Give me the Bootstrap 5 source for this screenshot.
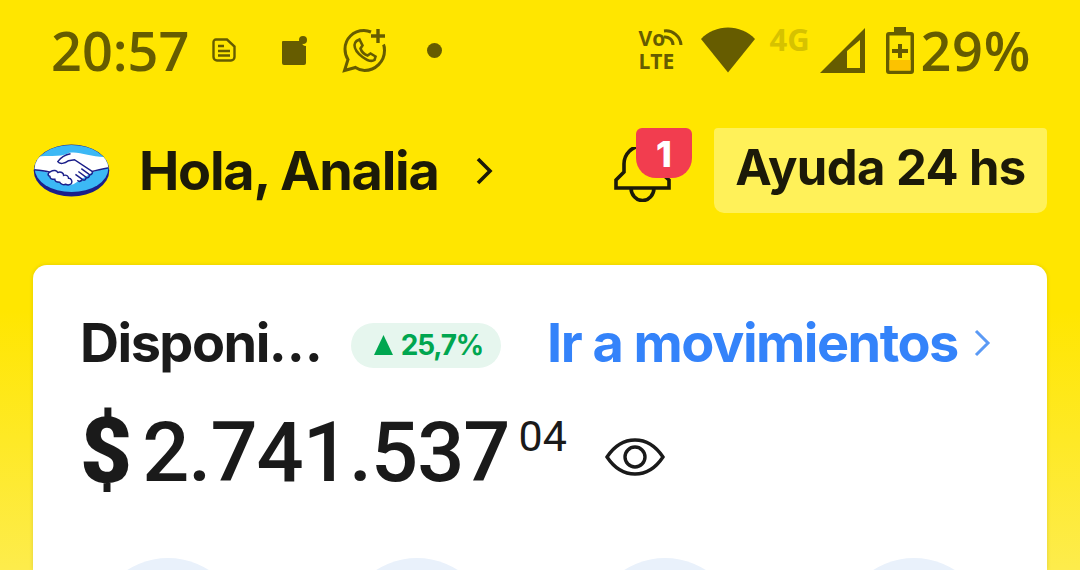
<!doctype html>
<html lang="es"><head><meta charset="utf-8">
<link href="https://cdn.jsdelivr.net/npm/bootstrap@5.3.0/dist/css/bootstrap.min.css" rel="stylesheet">
<style>
html,body{height:570px;overflow:hidden}
body{background:linear-gradient(#ffe600 0,#ffe600 310px,#fdec4c 570px);font-family:Inter,"Liberation Sans",sans-serif;color:#1c1a08}
.stbar{height:128px;padding:0 49px 28px 51px;color:#665c00}
.sttext{font-family:"Open Sans",sans-serif;font-size:54px;font-weight:600;line-height:1}
.pctnum{letter-spacing:.7px}
.gapdoc{margin-left:23px}.gapsq{margin-left:45px}.gapwa{margin-left:35px}.gapdot{margin-left:40px}
.volte{width:44px;height:46px;font-family:"Open Sans",sans-serif;font-size:21px;font-weight:700;line-height:23px;color:#665c00}
.gapwifi{margin-left:18px}.gap4g{margin-left:15px}.gapsig{margin-left:9px}.gapbat{margin-left:21px}.gappc{margin-left:7px}
.fourg{font-family:"Open Sans",sans-serif;font-size:31px;font-weight:700;color:#d6c200;line-height:1;margin-top:-21px;width:41px}
.hdr{height:137px;padding:0 33px 0 33px}
.hdrleft{height:85px}
.hola{font-size:54px;font-weight:700;letter-spacing:-1.25px;line-height:1;margin-left:29px}
.chevgap{margin-left:36px}
.bellbox{width:78px;height:85px;margin-right:22px}
.bellicon{left:0;top:19px}
.notif{position:absolute;left:22px;top:0;width:56px;height:50px;background:#f23d4f;color:#fff;border-radius:6px 6px 20px 20px;font-size:36px;font-weight:800;text-align:center;line-height:52px}
.helpbtn{width:333px;height:85px;background:#fff159;border-radius:4px 4px 10px 10px;font-size:49px;font-weight:700;letter-spacing:-.6px;line-height:1;padding-bottom:6px}
.panel{margin:0 33px;height:305px;overflow:hidden;border-radius:14px 14px 0 0;background:#fff;padding:51px 9px 0 11px;color:#1a1a1a;box-shadow:0 0 4px rgba(0,0,0,.12)}
.inner{padding-left:36px}
.disp{font-size:54px;font-weight:700;letter-spacing:-1.5px;line-height:1;width:228px}
.pct{width:150px;height:45px;border-radius:23px;background:#e6f6ee;color:#00a650;font-size:28px;font-weight:700;letter-spacing:-1.2px;margin-left:43px;margin-top:4px;padding-left:5px}
.golink{color:#3483fa;font-size:54px;font-weight:700;letter-spacing:-1.5px;line-height:1;text-decoration:none;margin-left:46px}
.chevblue{margin-left:16px}
.money{font-family:Roboto,sans-serif;font-size:83px;font-weight:500;letter-spacing:-1px;line-height:1;margin-top:37px}
.cents{font-size:43px;font-weight:400;letter-spacing:0;line-height:1;margin:8px 0 0 9px}
.dollar{font-weight:900;font-size:90px;margin-right:11px}
.eyegap{margin-left:38px;margin-top:10px}
.actions{margin-top:61px}
.actslot{width:25%}
.roundact{width:150px;height:150px;border-radius:50%;background:#e9f1fb}
</style></head><body>
<div class="stbar d-flex align-items-center">
 <span class="sttext">20:57</span>
 <svg class="gapdoc" width="24" height="24" viewBox="0 0 24 24" fill="none" stroke="#665c00" stroke-width="2.4"><path d="M4 1.500h11l7.500 7V19a3.500 3.500 0 0 1-3.500 3.500H5A3.500 3.500 0 0 1 1.500 19V4A2.500 2.500 0 0 1 4 1.500z"/><path d="M6 8h6M6 13h12M6 17.500h12"/></svg>
 <svg class="gapsq" width="26" height="29" viewBox="0 0 26 29" fill="#665c00"><path d="M2 5h19v1a4 4 0 0 0 4 4v17a2 2 0 0 1-2 2H3a2 2 0 0 1-2-2V6a1 1 0 0 1 1-1z"/><circle cx="22" cy="4" r="4"/></svg>
 <svg class="gapwa" width="45" height="45" viewBox="0 0 45 45" fill="none" stroke="#665c00" stroke-width="3"><path d="M29 4a19 19 0 0 0-7-1.500C11 2.500 3 11 3 21c0 4 1 7.500 3 10.500L2.500 42.500l11-3c3 2 6 3 9 3 11 0 20-9 20-20 0-2 0-4-1-6"/><path d="M14.500 13l3-1.500 3 6-2 3c1 3 4 6 7 7l3-2 5 3-1 3.500c-3 2-8 0-12-3s-8-8-8-12c0-2 1-3 2-4z" stroke-width="2.600"/><path d="M36 1v14M29 8h14" stroke-width="3.400"/></svg>
 <svg class="gapdot" width="15" height="15" viewBox="0 0 15 15"><circle cx="7.500" cy="7.500" r="7.500" fill="#665c00"/></svg>
 <div class="ms-auto d-flex align-items-center">
  <div class="volte position-relative">Vo<svg class="position-absolute top-0 end-0" width="20" height="20" viewBox="0 0 20 20" fill="none" stroke="#665c00" stroke-width="3"><path d="M1 4a15 15 0 0 1 17 14M1 10a8 8 0 0 1 9 8"/></svg><br>LTE</div>
  <svg class="gapwifi" width="54" height="46" viewBox="0 0 54 46" fill="#665c00"><path d="M27 45.500L0 12C7 4.500 17 .5 27 .5s20 4 27 11.500z"/></svg>
  <span class="fourg gap4g">4G</span>
  <svg class="gapsig" width="45" height="45" viewBox="0 0 45 45" fill="#665c00"><path fill-rule="evenodd" d="M45 0v45H0zM27 23v17h13V12z"/></svg>
  <svg class="gapbat" width="28" height="47" viewBox="0 0 28 47"><path d="M8 0h12v5h5a3 3 0 0 1 3 3v36a3 3 0 0 1-3 3H3a3 3 0 0 1-3-3V8a3 3 0 0 1 3-3h5z" fill="#665c00"/><rect x="3.500" y="8.500" width="21" height="35" fill="#ffe600"/><rect x="3.500" y="33" width="21" height="10.500" fill="#fcc200"/><path d="M12 17h4v5h6v4h-6v5h-4v-5H6v-4h6z" fill="#665c00"/></svg>
  <span class="sttext pctnum gappc">29%</span>
 </div>
</div>
<div class="hdr d-flex align-items-start">
 <div class="d-flex align-items-center hdrleft">
  <svg width="77" height="53" viewBox="0 0 78 54"><defs><clipPath id="logoclip"><ellipse cx="39" cy="25" rx="37.500" ry="24"/></clipPath></defs><ellipse cx="39" cy="27" rx="38.500" ry="26.500" fill="#1b1f8a"/><ellipse cx="39" cy="25" rx="37.500" ry="24" fill="#3cb8f5"/><path clip-path="url(#logoclip)" d="M0 14C14 10 26 15 37 9c11-2 24 6 41 4v11c-6 2-12 2-18 5L41 41c-6 1-14-1-20-8-5-4-11-6-21-7z" fill="#fff"/><path clip-path="url(#logoclip)" d="M38 10c-6 1-10 4-13 8 2 3 7 2 11-1l6-1 18 12M60 28c1 2-1 4-3 3l-8-6M57 31c1 2-1 4-3 3l-8-6M54 34c0 2-2 4-4 2l-7-5M50 36c-1 2-3 3-5 1M0 26c6 1 13 1 17 3M78 24c-6 1-12 2-18 4" fill="none" stroke="#1b1f8a" stroke-width="1.500"/><path d="M18 28c3-2 6-1 7 1 3-1 6 0 6 3 3-1 5 1 5 3 3 0 4 3 3 5-1 2-4 2-6 1-2 1-5 0-6-2-3 0-5-1-5-3-3 0-5-1-5-3-3-1-2-4 1-5z" fill="#fff" stroke="#1b1f8a" stroke-width="1.500"/></svg>
  <span class="hola">Hola, Analia</span>
  <svg class="chevgap" width="18" height="28" viewBox="0 0 18 28" fill="none" stroke="#1c1a08" stroke-width="3.600"><path d="M3 2l12 12L3 26"/></svg>
 </div>
 <div class="ms-auto position-relative bellbox">
  <svg class="position-absolute bellicon" width="57" height="55" viewBox="0 0 57 55" fill="none" stroke="#1c1a08" stroke-width="3.600"><path d="M2 41v-8l8-8V17a18 18 0 0 1 36 0v8l9 8v8zM17 41a11 12 0 0 0 23 0"/></svg>
  <span class="notif">1</span>
 </div>
 <div class="helpbtn d-flex align-items-center justify-content-center">Ayuda 24 hs</div>
</div>
<div class="panel">
 <div class="inner">
  <div class="d-flex align-items-center">
   <span class="disp">Disponi…</span>
   <span class="pct d-flex align-items-center justify-content-center gap-2"><svg width="19" height="20" viewBox="0 0 19 20" fill="#00a650"><path d="M9.500 0L19 20H0z"/></svg>25,7%</span>
   <a class="golink" href="#">Ir a movimientos</a>
   <svg class="chevblue" width="17" height="28" viewBox="0 0 17 28" fill="none" stroke="#5b9af5" stroke-width="3"><path d="M2 2l12 12L2 26"/></svg>
  </div>
  <div class="d-flex align-items-center money">
   <span class="dollar">$</span><span>2.741.537</span>
   <span class="cents align-self-start">04</span>
   <svg class="eyegap" width="60" height="38" viewBox="0 0 60 38" fill="none" stroke="#1a1a1a" stroke-width="3.400"><path d="M2 19C10 7 20 2 30 2s20 5 28 17c-8 12-18 17-28 17S10 31 2 19z"/><circle cx="30" cy="19" r="10"/></svg>
  </div>
 </div>
 <div class="d-flex actions">
  <div class="actslot d-flex justify-content-center"><div class="roundact"></div></div>
  <div class="actslot d-flex justify-content-center"><div class="roundact"></div></div>
  <div class="actslot d-flex justify-content-center"><div class="roundact"></div></div>
  <div class="actslot d-flex justify-content-center"><div class="roundact"></div></div>
 </div>
</div>
</body></html>
